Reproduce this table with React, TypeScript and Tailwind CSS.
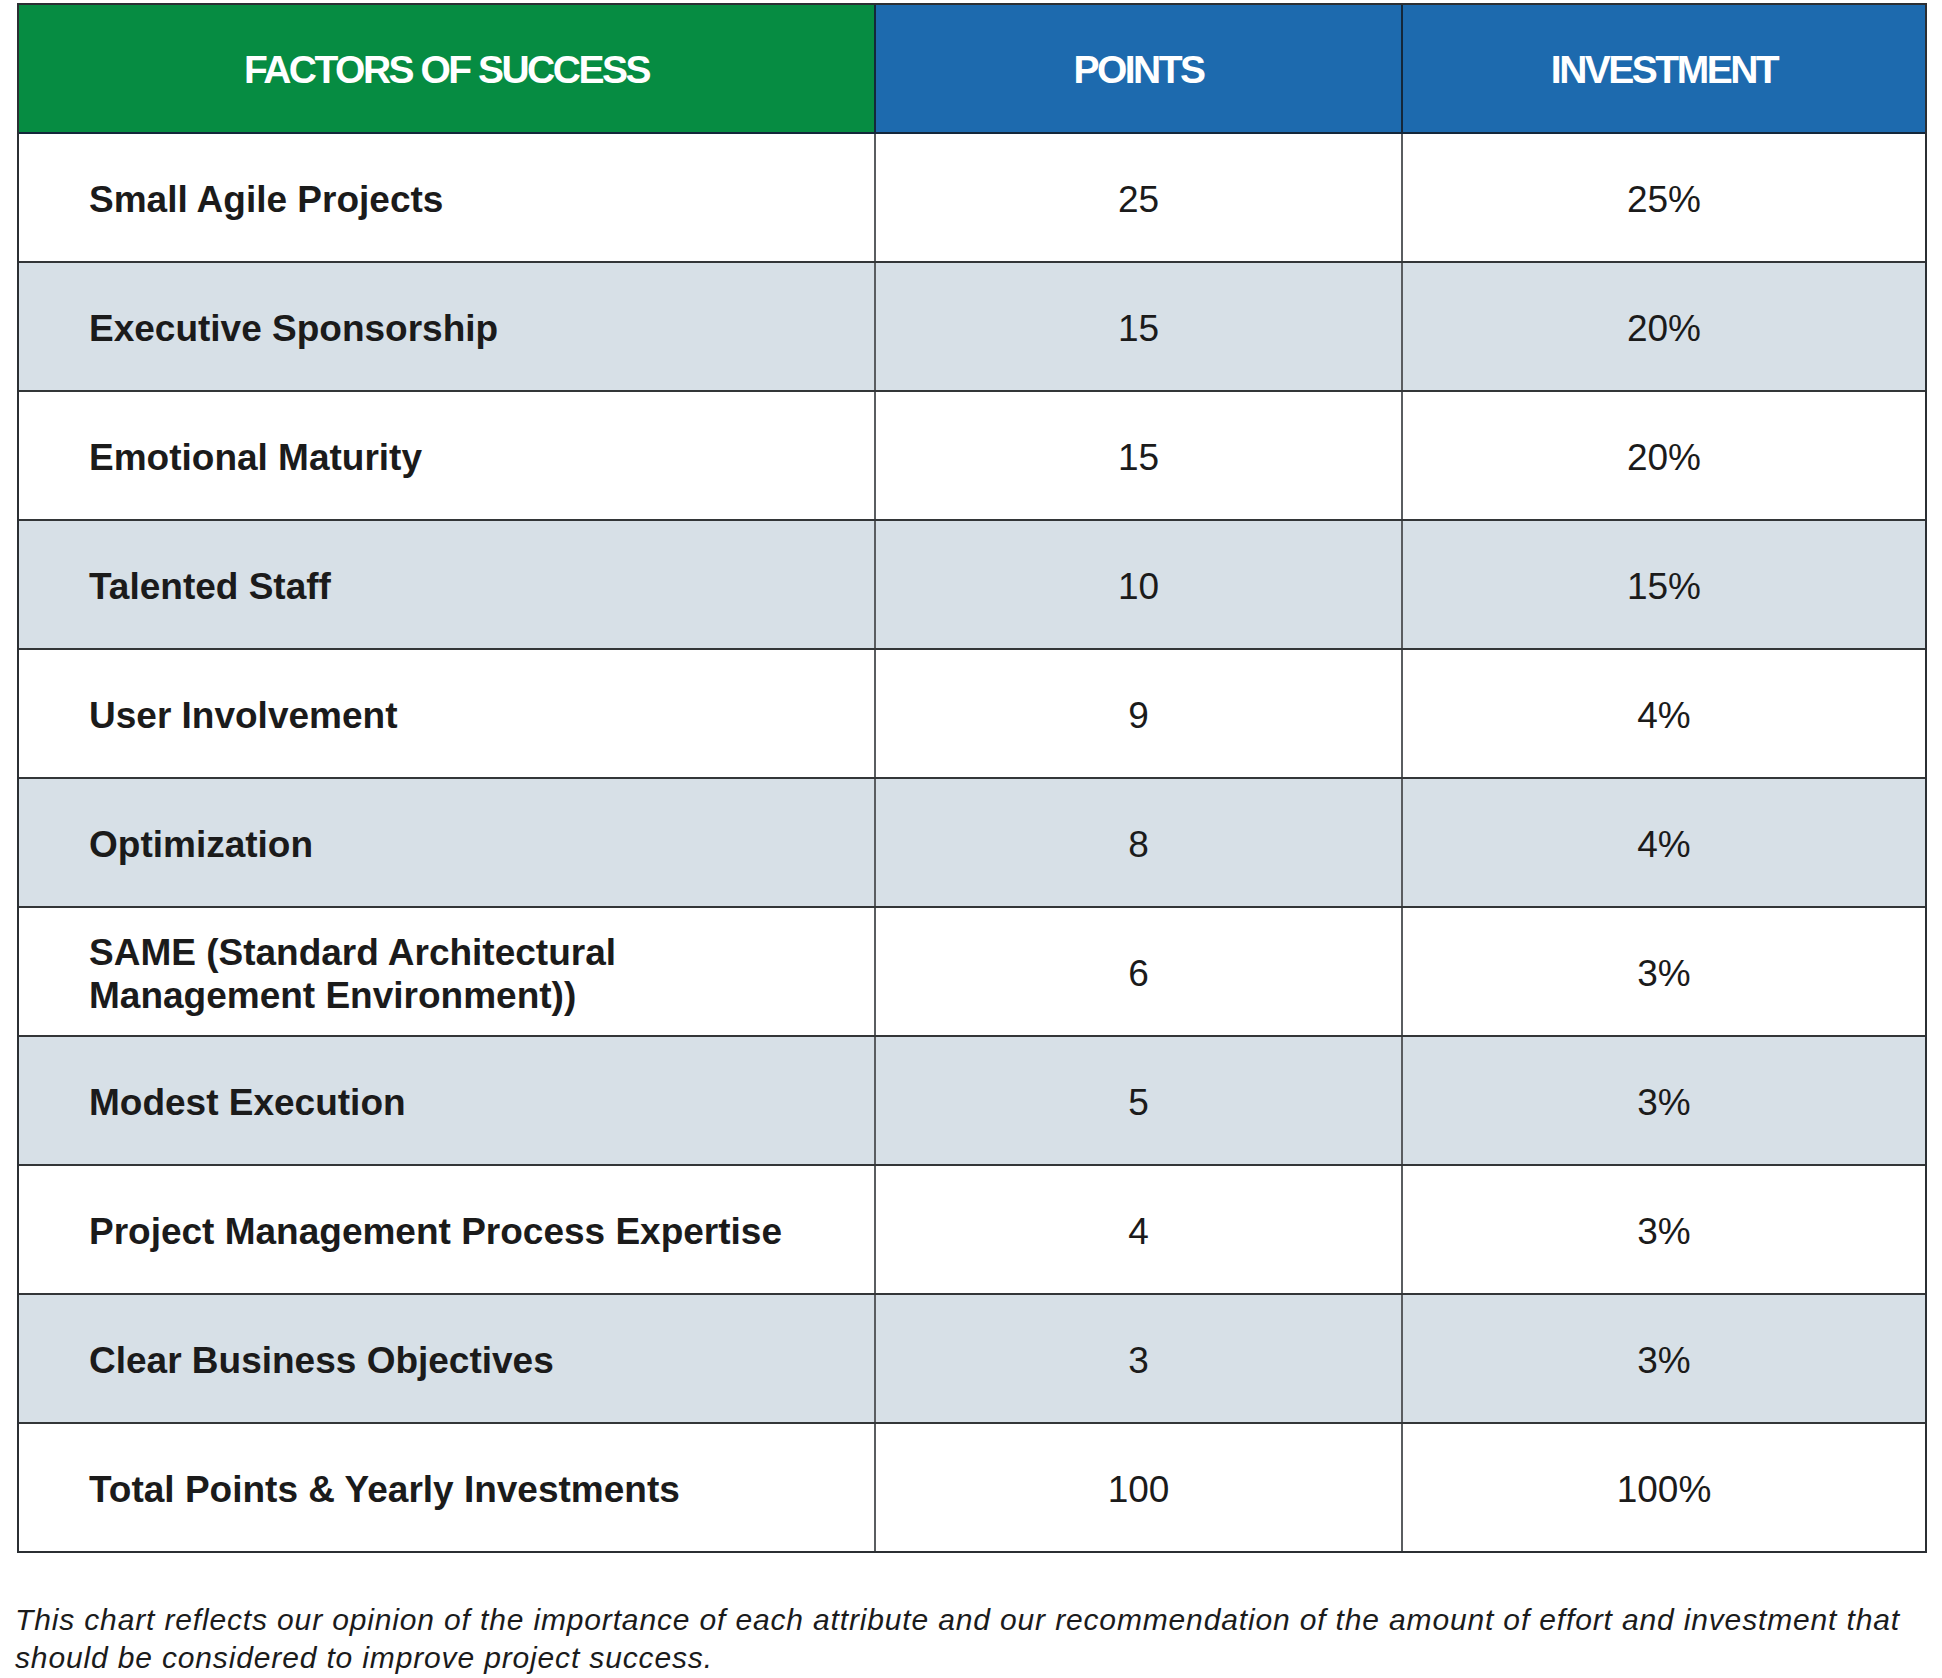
import React from "react";

type Row = { label: React.ReactNode; points: string; investment: string };

const ROWS: Row[] = [
  { label: "Small Agile Projects", points: "25", investment: "25%" },
  { label: "Executive Sponsorship", points: "15", investment: "20%" },
  { label: "Emotional Maturity", points: "15", investment: "20%" },
  { label: "Talented Staff", points: "10", investment: "15%" },
  { label: "User Involvement", points: "9", investment: "4%" },
  { label: "Optimization", points: "8", investment: "4%" },
  {
    label: (
      <>
        SAME (Standard Architectural
        <br />
        Management Environment))
      </>
    ),
    points: "6",
    investment: "3%",
  },
  { label: "Modest Execution", points: "5", investment: "3%" },
  { label: "Project Management Process Expertise", points: "4", investment: "3%" },
  { label: "Clear Business Objectives", points: "3", investment: "3%" },
  { label: "Total Points & Yearly Investments", points: "100", investment: "100%" },
];

export default function App() {
  return (
    <main
      className="min-h-screen w-full bg-white text-[#1b1b1b]"
      style={{ fontFamily: '"Liberation Sans", Arial, sans-serif' }}
    >
      <div className="pt-[3px] pl-[17px]">
        <div className="w-[1910px] border-2 border-[#2b2f33]">
          {/* header */}
          <div className="grid grid-cols-[855px_527px_1fr] h-[127px] text-white font-bold text-[39px] tracking-[-2.5px]">
            <div className="bg-[#068c42] flex items-center justify-center pt-1">FACTORS OF SUCCESS</div>
            <div className="bg-[#1d6aae] border-l-2 border-[#14273a] flex items-center justify-center pt-1">POINTS</div>
            <div className="bg-[#1d6aae] border-l-2 border-[#14273a] flex items-center justify-center pt-1">INVESTMENT</div>
          </div>

          {ROWS.map((row, i) => (
            <div
              key={i}
              className={`grid grid-cols-[855px_527px_1fr] h-[129px] border-t-2 ${
                i === 0 ? "border-[#14273a]" : "border-[#333638]"
              } ${i % 2 === 1 ? "bg-[#d7e0e7]" : "bg-white"}`}
            >
              <div className="flex items-center pl-[70px] pr-2 pt-1 text-[37px] font-bold leading-[43px]">
                {row.label}
              </div>
              <div className="border-l-2 border-[#5a5d60] flex items-center justify-center pt-1 text-[37px]">
                {row.points}
              </div>
              <div className="border-l-2 border-[#5a5d60] flex items-center justify-center pt-1 text-[37px]">
                {row.investment}
              </div>
            </div>
          ))}
        </div>
      </div>

      <p className="mt-[48px] pl-[15px] text-[30px] italic leading-[38px] tracking-[0.85px] whitespace-nowrap">
        This chart reflects our opinion of the importance of each attribute and our recommendation of the amount of effort and investment that
        <br />
        should be considered to improve project success.
      </p>
    </main>
  );
}
